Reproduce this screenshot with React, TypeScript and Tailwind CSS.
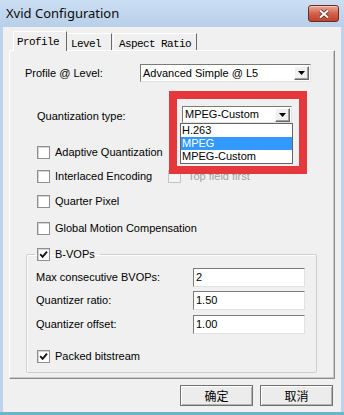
const Check = ({ checked = false, disabled = false }: { checked?: boolean; disabled?: boolean }) => (
  <span
    className={`w-[13px] h-[13px] shrink-0 border flex items-center justify-center ${
      disabled
        ? "border-[#c4c4c4] bg-[#f4f4f4]"
        : "border-[#8e8f8f] bg-white shadow-[inset_1px_1px_0_#d4d4d4]"
    }`}
  >
    {checked && (
      <svg width="9" height="9" viewBox="0 0 9 9">
        <path d="M1.2 4.2 L3.6 6.8 L8 1.6" stroke="#141414" strokeWidth="1.9" fill="none" />
      </svg>
    )}
  </span>
);

const Arrow = () => (
  <span className="w-[15px] h-[14px] shrink-0 bg-[#f0f0f0] border border-t-white border-l-white border-r-[#696969] border-b-[#696969] shadow-[inset_-1px_-1px_0_#a0a0a0] flex items-center justify-center">
    <svg width="7" height="4" viewBox="0 0 7 4">
      <path d="M0 0 H7 L3.5 4 Z" fill="#000" />
    </svg>
  </span>
);

const Combo = ({ text, className = "" }: { text: string; className?: string }) => (
  <div
    className={`h-full bg-white border border-t-[#7a7a7a] border-l-[#7a7a7a] border-r-[#e3e3e3] border-b-[#e3e3e3] flex items-center pl-[2px] pr-[1px] ${className}`}
  >
    <span className="flex-1 truncate">{text}</span>
    <Arrow />
  </div>
);

const Field = ({ value }: { value: string }) => (
  <div className="w-[112px] h-[19px] bg-white border border-t-[#7a7a7a] border-l-[#7a7a7a] border-r-[#e3e3e3] border-b-[#e3e3e3] flex items-center pl-[2px]">
    {value}
  </div>
);

const CheckRow = ({ label, checked = false, className = "" }: { label: string; checked?: boolean; className?: string }) => (
  <div className={`h-[13px] flex items-center gap-[5px] ${className}`}>
    <Check checked={checked} />
    <span>{label}</span>
  </div>
);

const App = () => {
  return (
    <div className="relative w-[344px] h-[415px] flex flex-col bg-[#bdd3ec] border-b-[3px] border-b-[#6cb4c6] overflow-hidden font-['Liberation_Sans',Arial,sans-serif] text-[11px] text-black">
      {/* title bar */}
      <div className="h-[27px] shrink-0 flex items-center justify-between pl-[6px] pr-[5px] bg-gradient-to-b from-[#cbdef2] to-[#b8cfe9]">
        <span className="font-['Noto_Sans',sans-serif] text-[13px] text-[#0c0c0c]">Xvid Configuration</span>
        <span className="w-[31px] h-[17px] rounded-[3px] border border-[#6e2b22] bg-gradient-to-b from-[#e9a899] via-[#d3624c] to-[#c0412b] flex items-center justify-center shadow-[inset_0_1px_0_#f3c9bd]">
          <svg width="12" height="10" viewBox="0 0 12 10">
            <path d="M2 1.5 L10 8.5 M10 1.5 L2 8.5" stroke="#5a1f16" strokeWidth="3.6" />
            <path d="M2 1.5 L10 8.5 M10 1.5 L2 8.5" stroke="#fff" strokeWidth="2.2" />
          </svg>
        </span>
      </div>

      {/* client */}
      <div className="flex-1 mx-[3px] bg-[#f0f0f0] flex flex-col px-[6px] pt-[4px]">
        {/* tabs */}
        <div className="h-[19px] flex items-end pl-[4px] font-['Liberation_Mono',monospace] text-[11px] tracking-[-0.6px]">
          <div className="relative z-10 -mb-px w-[54px] h-[20px] bg-[#f0f0f0] border-t border-l border-white border-r border-r-[#696969] pl-[3px] pt-[2px]">
            Profile
          </div>
          <div className="w-[45px] h-[17px] border-t border-white border-r border-r-[#696969] pl-[4px] pt-[2px]">
            Level
          </div>
          <div className="ml-[1px] w-[84px] h-[17px] border-t border-l border-white border-r border-r-[#696969] pl-[5px] pt-[2px]">
            Aspect Ratio
          </div>
        </div>

        {/* panel */}
        <div className="h-[329px] shrink-0 flex flex-col border border-t-white border-l-white border-r-[#8a8a8a] border-b-[#8a8a8a] shadow-[inset_-1px_-1px_0_#c8c8c8]">
          <div className="mt-[13px] h-[18px] flex items-center">
            <span className="ml-[15px] w-[115px]">Profile @ Level:</span>
            <Combo text="Advanced Simple @ L5" className="w-[171px]" />
          </div>

          <div className="mt-[24px] h-[17px] flex items-center">
            <span className="ml-[27px] w-[145px] pt-[4px]">Quantization type:</span>
            <div className="relative w-[110px] h-full">
              <Combo text="MPEG-Custom" />
              <div className="absolute top-full left-[-2px] w-[113px] z-20 bg-white border border-[#646464] p-0">
                <div className="h-[13px] leading-[13px] pl-[1px]">H.263</div>
                <div className="h-[13px] leading-[13px] pl-[1px] bg-[#3399ff] text-white">MPEG</div>
                <div className="h-[13px] leading-[13px] pl-[1px]">MPEG-Custom</div>
              </div>
            </div>
          </div>

          <CheckRow label="Adaptive Quantization" className="ml-[27px] mt-[23px]" />

          <div className="ml-[27px] mt-[11px] h-[13px] flex items-center gap-[5px]">
            <Check />
            <span className="w-[108px]">Interlaced Encoding</span>
            <Check disabled />
            <span className="ml-[2px] text-[#a0a0a0]">Top field first</span>
          </div>

          <CheckRow label="Quarter Pixel" className="ml-[27px] mt-[12px]" />
          <CheckRow label="Global Motion Compensation" className="ml-[27px] mt-[14px]" />

          {/* B-VOPs group */}
          <fieldset className="ml-[16px] mt-[13px] w-[291px] border border-[#cfcfcf] rounded-[2px] shadow-[inset_1px_1px_0_#fff] pb-[9px]">
            <legend className="ml-[8px] px-[2px] pr-[5px]">
              <CheckRow label="B-VOPs" checked />
            </legend>
            <div className="mt-[7px] h-[19px] flex items-center pl-[9px]">
              <span className="w-[157px]">Max consecutive BVOPs:</span>
              <Field value="2" />
            </div>
            <div className="mt-[4px] h-[19px] flex items-center pl-[9px]">
              <span className="w-[157px]">Quantizer ratio:</span>
              <Field value="1.50" />
            </div>
            <div className="mt-[5px] h-[19px] flex items-center pl-[9px]">
              <span className="w-[157px]">Quantizer offset:</span>
              <Field value="1.00" />
            </div>
            <CheckRow label="Packed bitstream" checked className="ml-[10px] mt-[16px]" />
          </fieldset>
        </div>

        {/* buttons */}
        <div className="mt-[6px] mr-[2px] flex justify-end gap-[7px] font-['Noto_Sans_CJK_SC',sans-serif] text-[12px]">
          <button className="w-[73px] h-[21px] bg-[#ececec] border border-[#707070] shadow-[inset_1px_1px_0_#fff,inset_-1px_-1px_0_#b4b4b4] flex items-center justify-center">
            确定
          </button>
          <button className="w-[73px] h-[21px] bg-[#ececec] border border-[#707070] shadow-[inset_1px_1px_0_#fff,inset_-1px_-1px_0_#b4b4b4] flex items-center justify-center">
            取消
          </button>
        </div>
      </div>

      {/* red annotation box */}
      <div className="absolute left-[169px] top-[91px] w-[138px] h-[83px] border-[8px] border-[#e5383c] z-30 pointer-events-none" />
    </div>
  );
};

export default App;
